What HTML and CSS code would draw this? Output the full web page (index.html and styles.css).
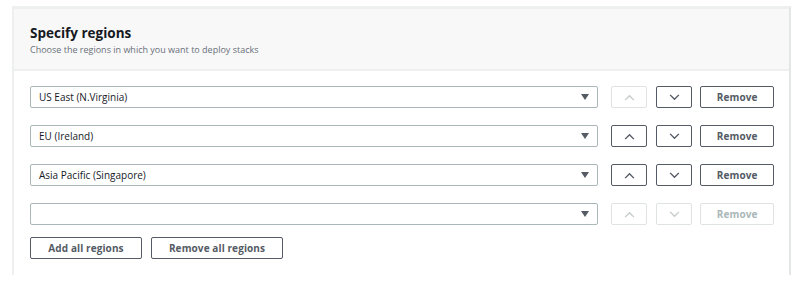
FILE: index.html
```html
<!DOCTYPE html>
<html lang="en">
<head>
    <meta charset="UTF-8">
    <title>Specify regions</title>
    <link rel="stylesheet" href="styles.css">
</head>
<body>
    <div class="panel">
        <div class="panel-header">
            <h2>Specify regions</h2>
            <p>Choose the regions in which you want to deploy stacks</p>
        </div>
        <div class="panel-body">
            <div class="region-row">
                <div class="select">US East (N.Virginia)<span class="caret"></span></div>
                <button class="icon-btn" disabled><svg viewBox="0 0 12 8"><path d="M1 7 L6 2 L11 7"/></svg></button>
                <button class="icon-btn"><svg viewBox="0 0 12 8"><path d="M1 1 L6 6 L11 1"/></svg></button>
                <button class="btn remove">Remove</button>
            </div>
            <div class="region-row">
                <div class="select">EU (Ireland)<span class="caret"></span></div>
                <button class="icon-btn"><svg viewBox="0 0 12 8"><path d="M1 7 L6 2 L11 7"/></svg></button>
                <button class="icon-btn"><svg viewBox="0 0 12 8"><path d="M1 1 L6 6 L11 1"/></svg></button>
                <button class="btn remove">Remove</button>
            </div>
            <div class="region-row">
                <div class="select">Asia Pacific (Singapore)<span class="caret"></span></div>
                <button class="icon-btn"><svg viewBox="0 0 12 8"><path d="M1 7 L6 2 L11 7"/></svg></button>
                <button class="icon-btn"><svg viewBox="0 0 12 8"><path d="M1 1 L6 6 L11 1"/></svg></button>
                <button class="btn remove">Remove</button>
            </div>
            <div class="region-row">
                <div class="select"><span class="caret"></span></div>
                <button class="icon-btn" disabled><svg viewBox="0 0 12 8"><path d="M1 7 L6 2 L11 7"/></svg></button>
                <button class="icon-btn" disabled><svg viewBox="0 0 12 8"><path d="M1 1 L6 6 L11 1"/></svg></button>
                <button class="btn remove" disabled>Remove</button>
            </div>
            <div class="actions">
                <button class="btn add-all">Add all regions</button>
                <button class="btn remove-all">Remove all regions</button>
            </div>
        </div>
    </div>
</body>
</html>
```

FILE: styles.css
```css
body {
    margin: 0;
    padding: 6px 10px 0 12px;
    font-family: 'Open Sans', 'Noto Sans', Arial, sans-serif;
    background: #fff;
    color: #16191f;
}
.panel {
    width: 775px;
    border-top: 3px solid #eef0f0;
    border-left: 2px solid #eef0f0;
    border-right: 2px solid #e3e6e6;
}
.panel-header {
    background: #f8f8f8;
    border-bottom: 2px solid #eef0f0;
    padding: 14px 16px 0;
    height: 46px;
}
.panel-header h2 {
    margin: 0;
    font-size: 13.5px;
    line-height: 20px;
    font-weight: bold;
    color: #16191f;
}
.panel-header p {
    margin: 0;
    font-size: 9px;
    line-height: 13px;
    color: #687078;
}
.panel-body {
    padding: 15px 15px 16px 16px;
    display: flex;
    flex-direction: column;
    gap: 17px;
}
.region-row {
    display: flex;
    align-items: center;
    height: 22px;
}
.select {
    width: 560px;
    height: 20px;
    border: 1px solid #aab7b8;
    border-radius: 2px;
    font-size: 10px;
    line-height: 20px;
    padding-left: 8px;
    display: flex;
    align-items: center;
    color: #16191f;
}
.caret {
    width: 0;
    height: 0;
    border-left: 4px solid transparent;
    border-right: 4px solid transparent;
    border-top: 6px solid #545b64;
    margin-left: auto;
    margin-right: 8px;
}
button {
    font-family: inherit;
    background: #fff;
    border: 1px solid #545b64;
    border-radius: 2px;
    color: #545b64;
    padding: 0;
    height: 22px;
    cursor: pointer;
}
.icon-btn {
    width: 36px;
    display: flex;
    align-items: center;
    justify-content: center;
}
.icon-btn svg {
    width: 11px;
    height: 7px;
    fill: none;
    stroke: #545b64;
    stroke-width: 1.6;
}
.region-row .icon-btn:nth-of-type(1) {
    margin-left: 13px;
}
.region-row .icon-btn:nth-of-type(2) {
    margin-left: 9px;
}
.btn {
    font-size: 10px;
    font-weight: bold;
    letter-spacing: 0.1px;
}
.remove {
    width: 74px;
    margin-left: 8px;
}
button:disabled {
    border-color: #dfe3e3;
    color: #aab7b8;
    cursor: default;
}
button:disabled svg {
    stroke: #c4cccc;
}
.actions {
    display: flex;
    gap: 9px;
    margin-top: -5px;
}
.add-all {
    width: 112px;
}
.remove-all {
    width: 132px;
}
```
